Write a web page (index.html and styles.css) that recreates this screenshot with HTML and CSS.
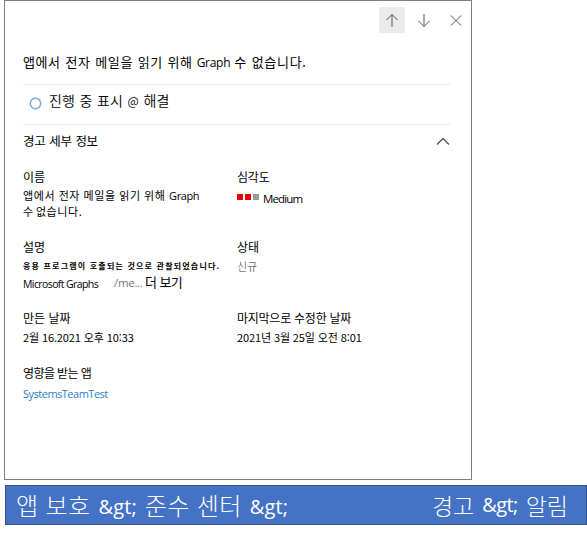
FILE: index.html
```html
<!DOCTYPE html>
<html lang="ko">
<head>
<meta charset="utf-8">
<title>경고</title>
<link rel="stylesheet" href="styles.css">
</head>
<body>
<main class="panel">
  <nav class="toolbar">
    <button class="tool active" aria-label="위로"><svg width="26" height="26" viewBox="0 0 26 26"><path d="M13 20V7.500M7.500 13L13 7.500L18.500 13"/></svg></button>
    <button class="tool" aria-label="아래로"><svg width="26" height="26" viewBox="0 0 26 26"><path d="M13 7V19.500M7.500 14L13 19.500L18.500 14"/></svg></button>
    <button class="tool" aria-label="닫기"><svg width="26" height="26" viewBox="0 0 26 26"><path d="M8 8.500L18 18.500M18 8.500L8 18.500"/></svg></button>
  </nav>
  <h1 class="title"><span>앱에서 전자 메일을 읽기 위해</span><span class="latin title-latin">Graph</span><span class="title-end">수 없습니다.</span></h1>
  <div class="status"><i class="ring"></i><span class="status-text">진행 중 표시 <span class="at">@</span> 해결</span></div>
  <div class="section"><h2 class="section-title">경고 세부 정보</h2><svg class="chevron" width="14" height="9" viewBox="0 0 14 9"><path d="M1 7.500L7 1.500L13 7.500"/></svg></div>
  <div class="details">
    <section class="field summary"><h3>이름</h3><p><span class="summary-text">앱에서 전자 메일을 읽기 위해</span> <span class="latin">Graph</span></p><p class="second">수 없습니다.</p></section>
    <section class="field severity"><h3 class="severity-label">심각도</h3><p class="level"><i></i><i></i><i></i><span class="latin medium">Medium</span></p></section>
    <section class="field description"><h3>설명</h3><p class="tiny">응용 프로그램이 호출되는 것으로 관찰되었습니다.</p><p class="more"><span class="latin graphs">Microsoft Graphs</span><span class="path">/me...</span><span class="more-link">더 보기</span></p></section>
    <section class="field"><h3 class="state">상태</h3><p class="new">신규</p></section>
    <section class="field created"><h3 class="created-label">만든 날짜</h3><p class="date">2월 16.2021 오후 10:33</p></section>
    <section class="field modified"><h3 class="modified-label">마지막으로 수정한 날짜</h3><p class="date">2021년 3월 25일 오전 8:01</p></section>
    <section class="field affected"><h3 class="affected-label">영향을 받는 앱</h3><p class="link">SystemsTeamTest</p></section>
  </div>
</main>
<footer class="banner"><div class="crumb left"><span>앱 보호</span><b>&amp;gt;</b><span>준수 센터</span><b>&amp;gt;</b></div><div class="crumb right"><span>경고</span><b>&amp;gt;</b><span>알림</span></div></footer>
</body>
</html>
```
FILE: styles.css
```css
* { box-sizing: border-box; }
body { margin: 0; width: 587px; height: 533px; overflow: hidden; background: #fff; color: #000; font-family: "Noto Sans CJK KR", sans-serif; font-weight: 400; }
h1, h2, h3, p { margin: 0; font-weight: 400; white-space: nowrap; }
.panel { width: 468px; height: 480px; margin-left: 4px; padding: 0 21px 0 18px; border: 1px solid #7f7f7f; }
.toolbar { display: flex; gap: 6px; height: 46px; padding-top: 6px; justify-content: flex-end; margin-right: -19px; }
.tool { width: 26px; height: 26px; padding: 0; border: 0; background: none; }
.tool.active { background: #ebebeb; }
svg { display: block; fill: none; stroke: #555; stroke-width: 1; }
.latin { font-family: "Open Sans", sans-serif; font-weight: 400; }
.title { display: flex; height: 37px; line-height: 30px; font-size: 13px; letter-spacing: .6px; word-spacing: .5px; }
.title-latin { font-size: 12px; letter-spacing: -.3px; margin: 1px 4px 0; }
.title-end { letter-spacing: .7px; }
.status { display: flex; align-items: center; height: 41px; border: solid #eaeaea; border-width: 1px 0; padding-left: 7px; }
.ring { width: 11px; height: 11px; border: 1.5px solid #5b9bd5; border-radius: 50%; margin-top: -3px; box-shadow: 0 0 0 .4px #5b9bd5; }
.status-text { margin: -9px 0 0 8px; font-size: 14px; font-weight: 350; word-spacing: .8px; }
.at { font-size: 12px; }
.section { display: flex; justify-content: space-between; height: 42px; }
.section-title { font-size: 12.5px; line-height: 32px; letter-spacing: -.3px; word-spacing: .6px; }
.chevron { margin-top: 12px; stroke-width: 1.4; }
.details { display: grid; grid-template-columns: 214px 213px; grid-template-rows: 70px 71px 56px 50px; }
.field h3 { font-size: 12px; line-height: 19px; height: 20px; }
.field .severity-label { letter-spacing: -.2px; }
.field .affected-label { letter-spacing: -.6px; line-height: 18px; }
.field .modified-label { letter-spacing: -.25px; }
.field p { height: 16px; line-height: 15px; font-size: 11px; }
.summary p { margin-top: 1px; letter-spacing: .6px; word-spacing: -.2px; }
.summary .latin { font-size: 11px; letter-spacing: -.4px; }
.summary .second { margin-top: 0; letter-spacing: .6px; word-spacing: -1.5px; }
.level { display: flex; align-items: center; gap: 2px; margin-top: 2px; }
.level i { width: 6px; height: 6px; background: #e60000; margin-top: 0; }
.level i:nth-child(3) { background: #999; }
.field .level .medium { margin: 3px 0 0 2px; font-size: 11.5px; letter-spacing: -.85px; }
.field .tiny { margin-top: 1px; font-size: 8px; letter-spacing: 1.2px; font-weight: 700; }
.more { display: flex; align-items: center; }
.graphs { font-size: 10.5px; letter-spacing: -.6px; padding-top: 4px; }
.path { width: 31px; margin-left: 16px; font-size: 11.5px; letter-spacing: -.3px; font-family: "Open Sans", sans-serif; color: #777; }
.more-link { font-size: 13px; font-weight: 400; margin-top: -2px; letter-spacing: -.6px; }
.field .new { margin-top: 2px; color: #333; font-weight: 300; }
.field .date { margin-top: 2px; letter-spacing: -.12px; }
.field .created .date { letter-spacing: -.3px; }
.field .link { margin-top: 2px; font-size: 11px; letter-spacing: -.5px; color: #2b80c5; font-family: "Open Sans", sans-serif; }
.banner { display: flex; justify-content: space-between; width: 582px; height: 40px; margin: 5px 0 0 5px; padding: 0 18px 0 10px; border: 1px solid #2f528f; background: #4472c4; color: #fff; font-weight: 300; }
.crumb { display: flex; align-items: center; font-size: 24px; line-height: 38px; white-space: nowrap; letter-spacing: .4px; }
.crumb b { margin: 3px 8px 0; font: 400 20px/36px "Open Sans", sans-serif; letter-spacing: .1px; }
.right { font-size: 23px; letter-spacing: 0; }
.right b { margin: 0 8px; letter-spacing: -.6px; }
```
